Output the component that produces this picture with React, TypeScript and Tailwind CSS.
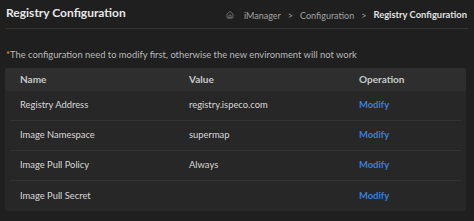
import { Home } from 'lucide-react';

const rows = [
  { name: 'Registry Address', value: 'registry.ispeco.com' },
  { name: 'Image Namespace', value: 'supermap' },
  { name: 'Image Pull Policy', value: 'Always' },
  { name: 'Image Pull Secret', value: '' },
];

export default function App() {
  return (
    <div
      className="w-[474px] h-[221px] bg-[#1f1f1f] text-[#d4d4d4] overflow-hidden"
      style={{ fontFamily: 'Lato, sans-serif' }}
    >
      <div className="mx-[6px] flex items-center justify-between h-[29px] border-b border-[#333333]">
        <h1 className="text-[12px] font-bold text-[#e6e6e6] leading-none pb-[3px]">Registry Configuration</h1>
        <div className="flex items-center text-[9px] text-[#a0a0a0] pt-[3px] pr-[1px]">
          <Home className="w-[8px] h-[8px] mr-[10px]" strokeWidth={1.8} />
          <span>iManager</span>
          <span className="mx-[7px]">&gt;</span>
          <span>Configuration</span>
          <span className="mx-[7px]">&gt;</span>
          <span className="font-bold text-[9.4px] text-[#e0e0e0]">Registry Configuration</span>
        </div>
      </div>
      <p className="mx-[6px] mt-[19px] text-[9.4px] text-[#b8b8b8] leading-[14px]">
        <span className="text-[#e0a030]">*</span>The configuration need to modify first, otherwise the new environment will not work
      </p>
      <div className="mx-[5px] w-[461px] mt-[6px] bg-[#272727] rounded-[2px] overflow-hidden text-[9.4px]">
        <div className="grid grid-cols-[169px_170px_1fr] h-[23px] items-center bg-[#2e2e2e] font-bold text-[10px] text-[#c8c8c8] px-[15px]">
          <span>Name</span>
          <span>Value</span>
          <span>Operation</span>
        </div>
        {rows.map((r, i) => (
          <div
            key={r.name}
            className={`grid grid-cols-[169px_170px_1fr] h-[30px] items-center mx-[5px] px-[10px] text-[#d8d8d8] ${i < rows.length - 1 ? 'border-b border-[#323232]' : ''}`}
          >
            <span>{r.name}</span>
            <span>{r.value}</span>
            <span className="font-bold text-[#3b7fd8]">Modify</span>
          </div>
        ))}
      </div>
    </div>
  );
}
